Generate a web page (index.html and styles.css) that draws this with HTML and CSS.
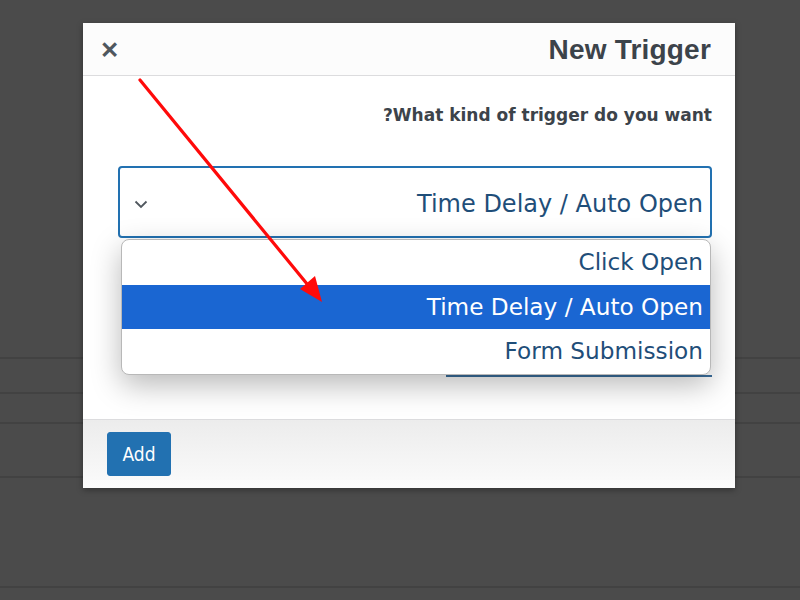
FILE: index.html
```html
<!DOCTYPE html>
<html>
<head>
<meta charset="utf-8">
<link rel="stylesheet" href="styles.css">
</head>
<body>
<div class="page">
  <div class="row r1"></div>
  <div class="row r2"></div>
  <div class="row r3"></div>
  <div class="row r4"></div>
  <div class="row r5"></div>
</div>

<div class="modal" dir="rtl">
  <div class="modal-header">
    <h2 class="title">New Trigger</h2>
    <span class="close">&#x2715;</span>
  </div>
  <div class="modal-body">
    <label class="question">What kind of trigger do you want?</label>
    <div class="select">
      <span class="select-value">Time Delay / Auto Open</span>
      <svg class="chevron" width="14" height="9" viewBox="0 0 14 9"><path d="M1.5 1.5 L7 7 L12.5 1.5" fill="none" stroke="#50575e" stroke-width="1.8"/></svg>
    </div>
    <div class="help"><span class="help-line"></span></div>
  </div>
  <div class="modal-footer">
    <button class="btn-add">Add</button>
  </div>

  <ul class="dropdown">
    <li class="opt">Click Open</li>
    <li class="opt selected">Time Delay / Auto Open</li>
    <li class="opt">Form Submission</li>
  </ul>
</div>

<svg class="arrow" width="800" height="600" viewBox="0 0 800 600">
  <line x1="140" y1="80" x2="312" y2="290" stroke="#ff0a0a" stroke-width="3.2" stroke-linecap="round"/>
  <polygon points="322,302 300,289 315,276" fill="#ff0a0a"/>
</svg>
</body>
</html>
```

FILE: styles.css
```css
html, body {
  margin: 0;
  padding: 0;
}
body {
  width: 800px;
  height: 600px;
  background: #4b4b4b;
  overflow: hidden;
  position: relative;
  font-family: "Liberation Sans", Arial, sans-serif;
}
.page {
  padding-top: 357px;
}
.row {
  border-top: 2px solid #424242;
}
.r1 { height: 33px; }
.r2 { height: 28px; }
.r3 { height: 52px; }
.r4 { height: 108px; }
.r5 { height: 20px; }

.modal {
  position: absolute;
  left: 83px;
  top: 23px;
  width: 652px;
  height: 465px;
  background: #fff;
  box-shadow: 0 2px 6px rgba(0,0,0,.35);
  display: flex;
  flex-direction: column;
}
.modal-header {
  height: 53px;
  box-sizing: border-box;
  border-bottom: 1px solid #dcdcde;
  background: #fcfcfc;
  display: flex;
  align-items: center;
  justify-content: space-between;
  padding: 2px 24px 0 17px;
}
.title {
  margin: 0;
  font-size: 28px;
  font-weight: bold;
  color: #3c434a;
  letter-spacing: 0.2px;
}
.close {
  font-size: 23px;
  font-weight: bold;
  color: #50575e;
  line-height: 1;
}
.modal-body {
  flex: 1;
  padding: 0 23px 0 35px;
  display: flex;
  flex-direction: column;
}
.question {
  margin-top: 28px;
  font-family: "DejaVu Sans", sans-serif;
  font-size: 17px;
  font-weight: bold;
  color: #3c434a;
  line-height: 22px;
}
.select {
  margin-top: 40px;
  height: 72px;
  box-sizing: border-box;
  border: 2px solid #2271b1;
  border-radius: 4px;
  display: flex;
  align-items: center;
  justify-content: space-between;
  padding: 0 7px 0 14px;
}
.select-value {
  font-family: "DejaVu Sans", sans-serif;
  font-size: 24px;
  color: #1f4e79;
  position: relative;
  top: 2px;
}
.chevron {
  display: block;
  position: relative;
  top: 2px;
}
.help {
  margin-top: 137px;
  display: flex;
}
.help-line {
  display: block;
  width: 266px;
  border-bottom: 2px solid #3a6e9c;
}
.modal-footer {
  height: 69px;
  box-sizing: border-box;
  border-top: 1px solid #dcdcde;
  background: linear-gradient(#ececec, #fbfbfb);
  display: flex;
  align-items: center;
  padding: 0 24px;
  justify-content: flex-end;
}
.btn-add {
  width: 64px;
  height: 44px;
  background: #2271b1;
  border: 1px solid #2271b1;
  border-radius: 3px;
  color: #fff;
  font-family: "DejaVu Sans Condensed", "DejaVu Sans", sans-serif;
  font-size: 19px;
  padding: 0;
}

.dropdown {
  position: absolute;
  left: 38px;
  top: 216px;
  width: 590px;
  margin: 0;
  padding: 0;
  list-style: none;
  background: #fff;
  border: 1px solid #b8b8b8;
  border-radius: 8px;
  box-sizing: border-box;
  overflow: hidden;
  box-shadow: 0 10px 30px rgba(0,0,0,.28);
}
.opt {
  height: 44.5px;
  line-height: 44.5px;
  padding: 0 7px;
  font-family: "DejaVu Sans", sans-serif;
  font-size: 23.2px;
  color: #1f4e79;
  text-align: right;
}
.opt.selected {
  background: #1a66d2;
  color: #fff;
}

.arrow {
  position: absolute;
  left: 0;
  top: 0;
  pointer-events: none;
}
```
